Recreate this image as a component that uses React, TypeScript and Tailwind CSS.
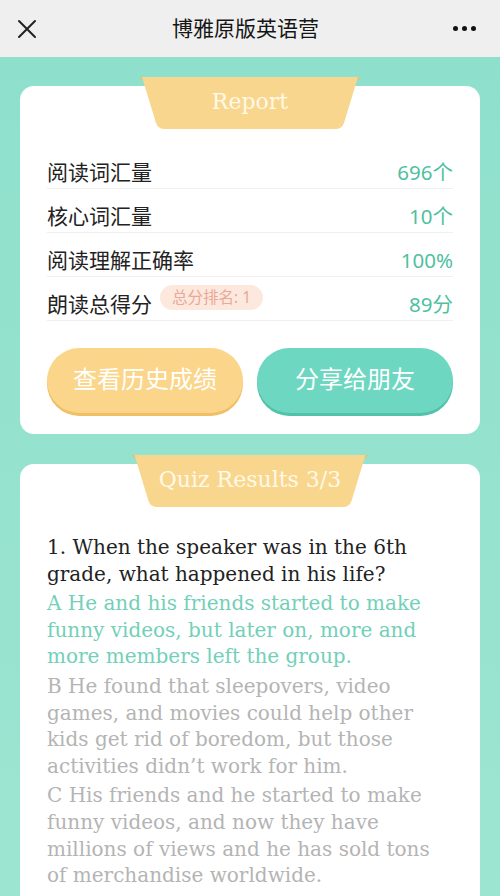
import React from 'react';

const SANS = 'font-["Noto_Sans","Noto_Sans_CJK_SC",sans-serif]';
const SERIF = 'font-["DejaVu_Serif","Noto_Sans_CJK_SC",serif]';

interface TabProps {
  label: string;
  width: number;
}

// ribbon-like yellow tab that hangs over the top edge of a card
function Tab({ label, width }: TabProps) {
  const w = width;
  const h = 52;
  return (
    <div
      className="absolute left-1/2 top-[-9px] -translate-x-1/2 flex items-center justify-center"
      style={{ width: w, height: h }}
    >
      <svg className="absolute inset-0" width={w} height={h} viewBox={`0 0 ${w} ${h}`}>
        <polygon points={`0,0 10,0 10,9`} fill="#e9bf6c" />
        <polygon points={`${w},0 ${w - 10},0 ${w - 10},9`} fill="#e9bf6c" />
        <path
          d={`M3 0 L${w - 3} 0 L${w - 17} ${h - 6} Q${w - 19} ${h} ${w - 26} ${h} L26 ${h} Q19 ${h} 17 ${h - 6} Z`}
          fill="#f9d68e"
        />
      </svg>
      <span className={`relative ${SERIF} text-[22px] text-[#fff9e6] pb-[3px]`}>{label}</span>
    </div>
  );
}

const rows = [
  { label: '阅读词汇量', value: '696个' },
  { label: '核心词汇量', value: '10个' },
  { label: '阅读理解正确率', value: '100%' },
  { label: '朗读总得分', value: '89分', badge: '总分排名: 1' },
];

export default function App() {
  return (
    <div className={`w-[500px] h-[896px] overflow-hidden flex flex-col bg-[#8fe1cd] ${SANS}`}>
      {/* top bar */}
      <div className="h-[57px] shrink-0 bg-[#efefef] flex items-center justify-between px-[14px]">
        <svg width="22" height="22" viewBox="0 0 22 22" className="ml-[2px]">
          <path d="M3 3 L19 19 M19 3 L3 19" stroke="#222" strokeWidth="2" strokeLinecap="round" />
        </svg>
        <span className="text-[21px] text-[#151515]">博雅原版英语营</span>
        <div className="flex items-center gap-[4px] mr-[10px]">
          <span className="w-[5px] h-[5px] rounded-full bg-[#111]" />
          <span className="w-[5px] h-[5px] rounded-full bg-[#111]" />
          <span className="w-[5px] h-[5px] rounded-full bg-[#111]" />
        </div>
      </div>

      <div className="flex-1 bg-gradient-to-b from-[#8ee0cc] to-[#9fe6d2] px-[20px] pt-[29px]">
        {/* report card */}
        <div className="relative bg-white rounded-[14px] px-[27px] pt-[59px] pb-[21px]">
          <Tab label="Report" width={222} />
          {rows.map((r) => (
            <div
              key={r.label}
              className="flex items-center justify-between pt-[16px] pb-[5px] leading-[22px] border-b border-[#f0f0f0]"
            >
              <div className="flex items-center">
                <span className="text-[21px] text-[#222]">{r.label}</span>
                {r.badge && (
                  <span className="ml-[8px] -mt-[14px] h-[25px] px-[12px] flex items-center rounded-full bg-[#fde8dd] text-[15.5px] text-[#e9a898]">
                    {r.badge}
                  </span>
                )}
              </div>
              <span className="text-[20.5px] text-[#4fbf9f]">{r.value}</span>
            </div>
          ))}
          <div className="flex gap-[14px] mt-[27px]">
            <button className="flex-1 h-[65px] rounded-full bg-[#fbd58a] shadow-[0_3px_0_#efc066] text-[24px] text-white pb-[3px]">
              查看历史成绩
            </button>
            <button className="flex-1 h-[65px] rounded-full bg-[#6ed7c1] shadow-[0_3px_0_#52c2aa] text-[24px] text-white pb-[3px]">
              分享给朋友
            </button>
          </div>
        </div>

        {/* quiz card */}
        <div className="relative mt-[30px] bg-white rounded-t-[14px] px-[27px] pt-[70px] h-[600px]">
          <Tab label="Quiz Results 3/3" width={237} />
          <div className={`${SERIF} text-[20px] leading-[26.6px]`}>
            <p className="text-[#222]">1. When the speaker was in the 6th grade, what happened in his life?</p>
            <p className="mt-[3px] text-[#72d0b8]">
              A He and his friends started to make funny videos, but later on, more and more members left the group.
            </p>
            <p className="mt-[3px] text-[#b4b4b4]">
              B He found that sleepovers, video games, and movies could help other kids get rid of boredom, but those
              activities didn’t work for him.
            </p>
            <p className="mt-[3px] text-[#b4b4b4]">
              C His friends and he started to make funny videos, and now they have millions of views and he has sold tons
              of merchandise worldwide.
            </p>
          </div>
        </div>
      </div>
    </div>
  );
}
